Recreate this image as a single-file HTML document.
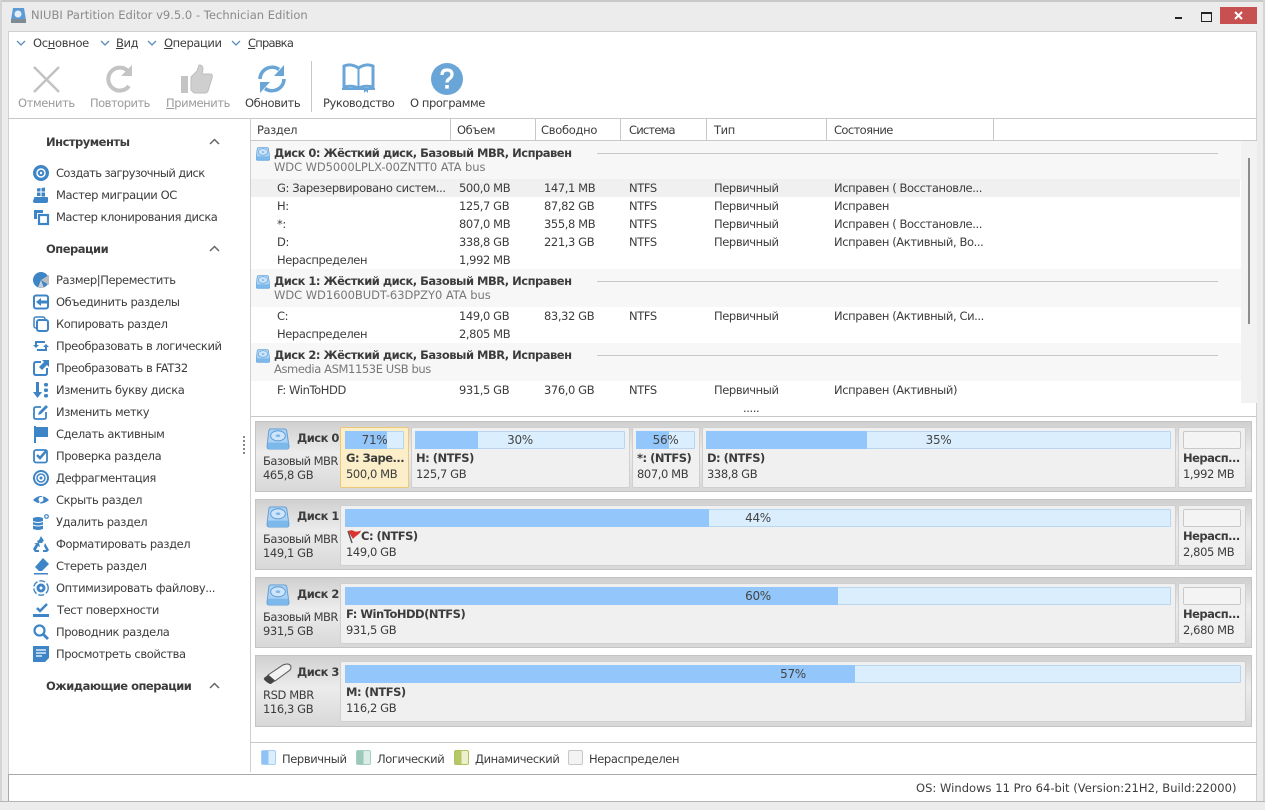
<!DOCTYPE html>
<html><head><meta charset="utf-8"><style>
html,body{margin:0;padding:0;width:1265px;height:810px;overflow:hidden;background:#ececec}
body{position:relative;font-family:"DejaVu Sans","Liberation Sans",sans-serif;font-size:11.5px;color:#3c3c3c}
.a,.t,.b{position:absolute}
.t{white-space:nowrap;line-height:14px;height:14px;letter-spacing:-.4px}
.h{font-weight:bold;font-size:11.5px;letter-spacing:-.5px}
.g{color:#9a9a9a}
svg{position:absolute;overflow:visible}
.l{position:absolute;background:#c8c8c8}
.i{fill:#3d85c6}
.dk{position:absolute;left:255px;width:997px;height:71px;background:linear-gradient(#d0d0d0,#ececec 45%,#d8d8d8);border:1px solid #c4c4c4;box-sizing:border-box}
.p{position:absolute;background:#f0f0f0;border:1px solid #cfcfcf;box-sizing:border-box;border-radius:2px}
.bar{position:absolute;height:18px;background:#dbeefe;border:1px solid #b9d6f0;box-sizing:border-box;border-radius:1px}
.fill{position:absolute;height:18px;background:#93c6fa}
.un{position:absolute;height:18px;width:58px;background:#f4f4f4;border:1px solid #c9c9c9;box-sizing:border-box;border-radius:2px}
.pc{position:absolute;height:18px;line-height:18px;text-align:center;color:#444;font-size:12px;letter-spacing:-.3px}
</style></head><body>
<svg width="0" height="0" style="position:absolute"><defs>
<symbol id="hdd" viewBox="0 0 24 24"><path d="M4 1h15q2 0 2.500 2L24 20q0 3-3 3H3q-3 0-3-3L2 3q.5-2 2-2z" fill="#a9d2f5" stroke="#5d9ad3"/><path d="M.5 16h23v4q0 3-3 3H3.500q-3 0-3-3z" fill="#7db8ea"/><ellipse cx="12" cy="8.500" rx="8" ry="5.500" fill="#cfe6fa" stroke="#5d9ad3"/><ellipse cx="12" cy="8.500" rx="2.500" ry="1.500" fill="#7db8ea"/></symbol>
</defs></svg>

<!-- window frame -->
<div class="l" style="left:0;top:0;width:1265px;height:2px"></div>
<div class="l" style="left:0;top:0;width:2px;height:810px;background:#d4d4d4"></div>
<div class="l" style="left:1263px;top:0;width:2px;height:810px;background:#d4d4d4"></div>
<div class="a" style="left:8px;top:31px;width:1249px;height:771px;background:#fff;box-sizing:border-box;border-top:1px solid #d0d0d0;border-right:1px solid #d0d0d0"></div>
<div class="l" style="left:8px;top:31px;width:1px;height:744px;background:#d0d0d0"></div>

<!-- title bar -->
<svg style="left:10px;top:7px" width="17" height="17" viewBox="0 0 17 17"><path d="M3 1h11l2 12v3H1v-3z" fill="#5d9bd5"/><path d="M1 12h15v4H1z" fill="#7e8a94"/><circle cx="8" cy="7" r="3.500" fill="#e2eefa"/></svg>
<div class="t" style="left:31px;top:8px;color:#8a8a8a;letter-spacing:.02px">NIUBI Partition Editor v9.5.0 - Technician Edition</div>
<div class="a" style="left:1175px;top:17px;width:7px;height:2px;background:#222"></div>
<div class="a" style="left:1201px;top:12px;width:9px;height:7px;border:1px solid #222;border-top-width:2px"></div>
<div class="a" style="left:1220px;top:7px;width:37px;height:17px;background:#c75050"></div>
<svg style="left:1234px;top:11px" width="9" height="9"><path d="M1 1l7 7M8 1L1 8" stroke="#fff" stroke-width="2"/></svg>

<!-- menu -->
<svg style="left:16px;top:40px" width="10" height="6"><path d="M1 1l4 4 4-4" fill="none" stroke="#5b8db8" stroke-width="1.300"/></svg>
<svg style="left:100px;top:40px" width="10" height="6"><path d="M1 1l4 4 4-4" fill="none" stroke="#5b8db8" stroke-width="1.300"/></svg>
<svg style="left:147px;top:40px" width="10" height="6"><path d="M1 1l4 4 4-4" fill="none" stroke="#5b8db8" stroke-width="1.300"/></svg>
<svg style="left:231px;top:40px" width="10" height="6"><path d="M1 1l4 4 4-4" fill="none" stroke="#5b8db8" stroke-width="1.300"/></svg>
<div class="t" style="left:33px;top:36px;letter-spacing:-.3px">Ос<u>н</u>овное</div>
<div class="t" style="left:116px;top:36px"><u>В</u>ид</div>
<div class="t" style="left:164px;top:36px"><u>О</u>перации</div>
<div class="t" style="left:248px;top:36px;letter-spacing:-.8px"><u>С</u>правка</div>

<!-- toolbar -->
<svg style="left:32px;top:65px" width="29" height="29"><path d="M2 2l25 25M27 2L2 27" stroke="#c2c2c2" stroke-width="2.500"/></svg>
<svg style="left:106px;top:64px" width="28" height="30" viewBox="0 0 28 30"><path d="M23 22a11.500 11.500 0 1 1-1-15" fill="none" stroke="#c4c4c4" stroke-width="4"/><path d="M26 1v11H15z" fill="#c4c4c4"/></svg>
<svg style="left:180px;top:64px" width="34" height="30" viewBox="0 0 34 30"><path d="M1 12h7v17H1z" fill="#c4c4c4"/><path d="M11 13l6-6 2-6q4 0 4 4l-1 5h9q2 1 1 4l-4 13q-1 2-3 2H14l-3-3z" fill="#cfcfcf" stroke="#bdbdbd"/></svg>
<svg style="left:257px;top:64px" width="30" height="30" viewBox="0 0 30 30"><path d="M3 15A12 12 0 0 1 22 5.500" fill="none" stroke="#6aa5d8" stroke-width="3.600"/><path d="M27 15A12 12 0 0 1 8 24.500" fill="none" stroke="#6aa5d8" stroke-width="3.600"/><path d="M27 1v11H17z" fill="#6aa5d8"/><path d="M3 29V18h10z" fill="#6aa5d8"/></svg>
<div class="l" style="left:311px;top:61px;width:1px;height:51px"></div>
<svg style="left:342px;top:64px" width="33" height="29" viewBox="0 0 33 29"><path d="M16.500 4Q9 -1 2 2v21q8-2 14.500 1Q23 21 31 23V2Q24 -1 16.500 4z" fill="#fff" stroke="#6aa5d8" stroke-width="3"/><path d="M16.500 4v20" stroke="#6aa5d8" stroke-width="2"/><path d="M0 24h33v2H26v3l-2-2-2 2v-3H0z" fill="#6aa5d8"/></svg>
<svg style="left:431px;top:63px" width="32" height="32" viewBox="0 0 32 32"><circle cx="16" cy="16" r="16" fill="#6aa5d8"/><path d="M11 12q0-5 5-5t5 4.500q0 2.500-3 4.500-2 1.300-2 3.500" fill="none" stroke="#fff" stroke-width="3.200"/><rect x="14.200" y="22" width="3.600" height="3.600" fill="#fff"/></svg>
<div class="t g" style="left:18px;top:96px">Отменить</div>
<div class="t g" style="left:90px;top:96px;letter-spacing:-.5px">Повторить</div>
<div class="t g" style="left:166px;top:96px"><u>П</u>рименить</div>
<div class="t" style="left:245px;top:96px">Обновить</div>
<div class="t" style="left:323px;top:96px;letter-spacing:-.45px">Руководство</div>
<div class="t" style="left:410px;top:96px">О программе</div>

<div class="l" style="left:8px;top:118px;width:1249px;height:1px"></div>
<div class="l" style="left:250px;top:118px;width:1px;height:654px;background:#cfcfcf"></div>

<!-- sidebar -->
<div class="t h" style="left:46px;top:135px">Инструменты</div>
<div class="t h" style="left:46px;top:242px">Операции</div>
<div class="t h" style="left:46px;top:679px">Ожидающие операции</div>
<svg style="left:209px;top:138px" width="11" height="7"><path d="M1 6l4.500-4.500L10 6" fill="none" stroke="#666" stroke-width="1.500"/></svg>
<svg style="left:209px;top:245px" width="11" height="7"><path d="M1 6l4.500-4.500L10 6" fill="none" stroke="#666" stroke-width="1.500"/></svg>
<svg style="left:209px;top:682px" width="11" height="7"><path d="M1 6l4.500-4.500L10 6" fill="none" stroke="#666" stroke-width="1.500"/></svg>

<div class="t" style="left:56px;top:166px;letter-spacing:-.6px">Создать загрузочный диск</div>
<div class="t" style="left:56px;top:188px">Мастер миграции ОС</div>
<div class="t" style="left:56px;top:210px;letter-spacing:-.5px">Мастер клонирования диска</div>
<div class="t" style="left:56px;top:273px">Размер|Переместить</div>
<div class="t" style="left:56px;top:295px">Объединить разделы</div>
<div class="t" style="left:56px;top:317px">Копировать раздел</div>
<div class="t" style="left:56px;top:339px">Преобразовать в логический</div>
<div class="t" style="left:56px;top:361px">Преобразовать в FAT32</div>
<div class="t" style="left:56px;top:383px">Изменить букву диска</div>
<div class="t" style="left:56px;top:405px">Изменить метку</div>
<div class="t" style="left:56px;top:427px">Сделать активным</div>
<div class="t" style="left:56px;top:449px">Проверка раздела</div>
<div class="t" style="left:56px;top:471px">Дефрагментация</div>
<div class="t" style="left:56px;top:493px">Скрыть раздел</div>
<div class="t" style="left:56px;top:515px">Удалить раздел</div>
<div class="t" style="left:56px;top:537px">Форматировать раздел</div>
<div class="t" style="left:56px;top:559px">Стереть раздел</div>
<div class="t" style="left:56px;top:581px">Оптимизировать файлову...</div>
<div class="t" style="left:57px;top:603px">Тест поверхности</div>
<div class="t" style="left:56px;top:625px">Проводник раздела</div>
<div class="t" style="left:56px;top:647px">Просмотреть свойства</div>

<!-- sidebar icons -->
<svg style="left:33px;top:165px" width="16" height="16"><circle cx="8" cy="8" r="8" fill="#3d85c6"/><circle cx="8" cy="8" r="4" fill="none" stroke="#fff" stroke-width="1.500"/><circle cx="8" cy="8" r="1.200" fill="#fff"/></svg>
<svg style="left:33px;top:187px" width="16" height="16" class="i"><path d="M1 11q0-1 1-1h12q1 0 1 1v3q0 2-2 2H2q-2 0-2-2zM4 1.500l3.500-.5v3.500H4zM8.500 1L12 .5v4H8.500zM4 5.500h3.500V9H4zM8.500 5.500H12V9.500H8.500z"/></svg>
<svg style="left:33px;top:209px" width="16" height="16"><path d="M1 1h9v3H4v6H1z" fill="#3d85c6"/><rect x="6" y="6" width="9" height="9" fill="#fff" stroke="#3d85c6" stroke-width="2.200"/></svg>
<svg style="left:33px;top:272px" width="16" height="16"><circle cx="8" cy="8" r="8" fill="#3d85c6"/><path d="M8 8l8-5v10z" fill="#b9bcc0"/><path d="M8 8l3 8-6-.5z" fill="#c9ccd0"/></svg>
<svg style="left:33px;top:294px" width="16" height="16"><rect x="1" y="1.500" width="14" height="13" rx="2" fill="none" stroke="#3d85c6" stroke-width="2"/><path d="M3 8l5-4v2.500h7v3H8V12z" fill="#3d85c6"/></svg>
<svg style="left:33px;top:316px" width="16" height="16"><rect x="1" y="1" width="11" height="11" rx="2" fill="none" stroke="#3d85c6" stroke-width="1.500"/><rect x="4" y="4" width="11" height="11" rx="2" fill="#fff" stroke="#3d85c6" stroke-width="2"/></svg>
<svg style="left:33px;top:338px" width="16" height="16"><path d="M3 7V4h9M13 9v3H4" fill="none" stroke="#3d85c6" stroke-width="2"/><path d="M0 7h6l-3 3zM16 9h-6l3-3z" fill="#3d85c6"/></svg>
<svg style="left:33px;top:360px" width="16" height="16"><path d="M8 2H3q-2 0-2 2v9q0 2 2 2h9q2 0 2-2V8" fill="none" stroke="#3d85c6" stroke-width="2"/><path d="M9 0h7v7l-2-2-5 5-3-3 5-5z" fill="#3d85c6"/></svg>
<svg style="left:33px;top:382px" width="16" height="16"><path d="M3 0h3v10h3l-4.500 6L0 10h3z" fill="#3d85c6"/><rect x="11" y="1" width="4" height="3.500" rx="1.500" fill="#3d85c6"/><rect x="11" y="6.500" width="4" height="3.500" rx="1.500" fill="#3d85c6"/><rect x="11" y="12" width="4" height="3.500" rx="1.500" fill="#3d85c6"/></svg>
<svg style="left:33px;top:404px" width="16" height="16"><path d="M8 3H3q-2 0-2 2v8q0 2 2 2h8q2 0 2-2V8" fill="none" stroke="#3d85c6" stroke-width="1.800"/><path d="M5 11l1-3 7-7 2 2-7 7z" fill="#3d85c6"/></svg>
<svg style="left:33px;top:426px" width="16" height="16"><path d="M1 0h2v17H1z" fill="#3d85c6"/><path d="M3 1h12v10H3z" fill="#3d85c6"/></svg>
<svg style="left:33px;top:448px" width="16" height="16"><rect x="1" y="2" width="13" height="12.500" rx="2" fill="none" stroke="#3d85c6" stroke-width="1.800"/><path d="M4 7l3 3 7-8" fill="none" stroke="#3d85c6" stroke-width="2.500"/></svg>
<svg style="left:33px;top:470px" width="16" height="16"><circle cx="8" cy="8" r="7" fill="none" stroke="#3d85c6" stroke-width="2"/><circle cx="8" cy="8" r="4" fill="none" stroke="#3d85c6" stroke-width="1.500"/><circle cx="8" cy="8" r="1.500" fill="#3d85c6"/></svg>
<svg style="left:33px;top:492px" width="16" height="16"><path d="M0 8q8-8 16 0-8 7-16 0z" fill="#3d85c6"/><circle cx="8" cy="7.500" r="2.500" fill="#fff"/><path d="M11 2L5 14" stroke="#fff" stroke-width="1"/></svg>
<svg style="left:33px;top:514px" width="16" height="16"><path d="M0 4q5-2 10 0v11q-5 2-10 0z" fill="#3d85c6"/><path d="M0 7.500q5 2 10 0M0 11q5 2 10 0" fill="none" stroke="#fff"/><circle cx="13.500" cy="2.500" r="1.800" fill="none" stroke="#3d85c6" stroke-width="1.200"/></svg>
<svg style="left:33px;top:536px" width="16" height="16"><path d="M8 0l3 5-2 1 1 1H5l-1-2 2-1zM12 7l4 7-2 2h-4v-2h3l-2-4zM0 13l3-5-2-1h5l1 4-2-1-2 4h3v2H2z" fill="#3d85c6"/></svg>
<svg style="left:33px;top:558px" width="16" height="16"><path d="M10 0l6 6-7 7H6L2 9z" fill="#3d85c6"/><path d="M1 15h14v1.500H1z" fill="#3d85c6"/></svg>
<svg style="left:33px;top:580px" width="16" height="16"><circle cx="8" cy="8" r="4.500" fill="#3d85c6"/><circle cx="8" cy="8" r="1.500" fill="#fff"/><circle cx="8" cy="8" r="7.200" fill="none" stroke="#3d85c6" stroke-width="1.400" stroke-dasharray="6 2"/></svg>
<svg style="left:33px;top:602px" width="16" height="16"><path d="M4 6l3 3 7-7" fill="none" stroke="#3d85c6" stroke-width="2.500"/><path d="M0 12h16v3H0z" fill="#3d85c6"/></svg>
<svg style="left:33px;top:624px" width="16" height="16"><circle cx="6.500" cy="6.500" r="5" fill="none" stroke="#3d85c6" stroke-width="2.200"/><path d="M10 10l5 5" stroke="#3d85c6" stroke-width="2.800"/></svg>
<svg style="left:33px;top:646px" width="16" height="16"><path d="M0 0h16v12l-4 4H0z" fill="#3d85c6"/><path d="M3 4h10M3 7h10M3 10h6" stroke="#fff" stroke-width="1.200"/></svg>

<div class="a" style="left:243px;top:436px;width:2px;height:18px;background:repeating-linear-gradient(#888 0 2px,transparent 2px 4px)"></div>

<!-- table header -->
<div class="l" style="left:251px;top:140px;width:1006px;height:1px"></div>
<div class="l" style="left:450px;top:119px;width:1px;height:21px"></div>
<div class="l" style="left:535px;top:119px;width:1px;height:21px"></div>
<div class="l" style="left:620px;top:119px;width:1px;height:21px"></div>
<div class="l" style="left:706px;top:119px;width:1px;height:21px"></div>
<div class="l" style="left:826px;top:119px;width:1px;height:21px"></div>
<div class="l" style="left:993px;top:119px;width:1px;height:21px"></div>
<div class="t" style="left:257px;top:123px">Раздел</div>
<div class="t" style="left:457px;top:123px">Объем</div>
<div class="t" style="left:541px;top:123px;letter-spacing:-.3px">Свободно</div>
<div class="t" style="left:629px;top:123px;letter-spacing:-.8px">Система</div>
<div class="t" style="left:714px;top:123px">Тип</div>
<div class="t" style="left:834px;top:123px;letter-spacing:-.6px">Состояние</div>

<!-- table bands -->
<div class="a" style="left:251px;top:141px;width:990px;height:38px;background:#f7f7f7"></div>
<div class="a" style="left:251px;top:179px;width:989px;height:18px;background:#f0f0f0"></div>
<div class="a" style="left:251px;top:269px;width:990px;height:38px;background:#f7f7f7"></div>
<div class="a" style="left:251px;top:343px;width:990px;height:38px;background:#f7f7f7"></div>
<div class="a" style="left:1241px;top:141px;width:16px;height:262px;background:#f2f2f2"></div>
<div class="a" style="left:1248px;top:158px;width:2px;height:166px;background:#8c8c8c"></div>
<div class="l" style="left:597px;top:153px;width:621px;height:1px"></div>
<div class="l" style="left:597px;top:281px;width:621px;height:1px"></div>
<div class="l" style="left:597px;top:355px;width:621px;height:1px"></div>
<svg style="left:256px;top:147px" width="14" height="14"><use href="#hdd"/></svg>
<svg style="left:256px;top:275px" width="14" height="14"><use href="#hdd"/></svg>
<svg style="left:256px;top:349px" width="14" height="14"><use href="#hdd"/></svg>

<div class="t h" style="left:274px;top:146px">Диск 0: Жёсткий диск, Базовый MBR, Исправен</div>
<div class="t" style="left:274px;top:160px;color:#777;letter-spacing:-.08px">WDC WD5000LPLX-00ZNTT0 ATA bus</div>
<div class="t" style="left:277px;top:181px">G: Зарезервировано систем...</div><div class="t" style="left:459px;top:181px">500,0 MB</div><div class="t" style="left:544px;top:181px">147,1 MB</div><div class="t" style="left:629px;top:181px">NTFS</div><div class="t" style="left:714px;top:181px">Первичный</div><div class="t" style="left:834px;top:181px">Исправен ( Восстановле...</div>
<div class="t" style="left:277px;top:199px">H:</div><div class="t" style="left:459px;top:199px">125,7 GB</div><div class="t" style="left:544px;top:199px">87,82 GB</div><div class="t" style="left:629px;top:199px">NTFS</div><div class="t" style="left:714px;top:199px">Первичный</div><div class="t" style="left:834px;top:199px">Исправен</div>
<div class="t" style="left:277px;top:217px">*:</div><div class="t" style="left:459px;top:217px">807,0 MB</div><div class="t" style="left:544px;top:217px">355,8 MB</div><div class="t" style="left:629px;top:217px">NTFS</div><div class="t" style="left:714px;top:217px">Первичный</div><div class="t" style="left:834px;top:217px">Исправен ( Восстановле...</div>
<div class="t" style="left:277px;top:235px">D:</div><div class="t" style="left:459px;top:235px">338,8 GB</div><div class="t" style="left:544px;top:235px">221,3 GB</div><div class="t" style="left:629px;top:235px">NTFS</div><div class="t" style="left:714px;top:235px">Первичный</div><div class="t" style="left:834px;top:235px">Исправен (Активный, Во...</div>
<div class="t" style="left:277px;top:253px">Нераспределен</div><div class="t" style="left:459px;top:253px">1,992 MB</div>
<div class="t h" style="left:274px;top:274px">Диск 1: Жёсткий диск, Базовый MBR, Исправен</div>
<div class="t" style="left:274px;top:288px;color:#777;letter-spacing:-.05px">WDC WD1600BUDT-63DPZY0 ATA bus</div>
<div class="t" style="left:277px;top:309px">C:</div><div class="t" style="left:459px;top:309px">149,0 GB</div><div class="t" style="left:544px;top:309px">83,32 GB</div><div class="t" style="left:629px;top:309px">NTFS</div><div class="t" style="left:714px;top:309px">Первичный</div><div class="t" style="left:834px;top:309px">Исправен (Активный, Си...</div>
<div class="t" style="left:277px;top:327px">Нераспределен</div><div class="t" style="left:459px;top:327px">2,805 MB</div>
<div class="t h" style="left:274px;top:348px">Диск 2: Жёсткий диск, Базовый MBR, Исправен</div>
<div class="t" style="left:274px;top:362px;color:#777">Asmedia ASM1153E USB bus</div>
<div class="t" style="left:277px;top:383px">F: WinToHDD</div><div class="t" style="left:459px;top:383px">931,5 GB</div><div class="t" style="left:544px;top:383px">376,0 GB</div><div class="t" style="left:629px;top:383px">NTFS</div><div class="t" style="left:714px;top:383px">Первичный</div><div class="t" style="left:834px;top:383px">Исправен (Активный)</div>
<div class="t" style="left:743px;top:401px">.....</div>
<div class="l" style="left:251px;top:416px;width:1006px;height:1px"></div>

<!-- Disk 0 -->
<div class="dk" style="top:421px"></div>
<svg style="left:266px;top:428px" width="24" height="22"><use href="#hdd"/></svg>
<div class="t h" style="left:297px;top:431px">Диск 0</div>
<div class="t" style="left:263px;top:454px;letter-spacing:-.55px">Базовый MBR</div>
<div class="t" style="left:263px;top:468px">465,8 GB</div>
<div class="p" style="left:340px;top:427px;width:69px;height:61px;background:#fbeec8;border-color:#ecc978"></div>
<div class="bar" style="left:345px;top:431px;width:59px"></div><div class="fill" style="left:345px;top:431px;width:42px"></div><div class="pc" style="left:345px;top:431px;width:59px">71%</div>
<div class="t h" style="left:346px;top:451px">G: Заре...</div><div class="t" style="left:346px;top:467px">500,0 MB</div>
<div class="p" style="left:411px;top:427px;width:219px;height:61px"></div>
<div class="bar" style="left:415px;top:431px;width:210px"></div><div class="fill" style="left:415px;top:431px;width:63px"></div><div class="pc" style="left:415px;top:431px;width:210px">30%</div>
<div class="t h" style="left:416px;top:451px">H: (NTFS)</div><div class="t" style="left:416px;top:467px">125,7 GB</div>
<div class="p" style="left:632px;top:427px;width:68px;height:61px"></div>
<div class="bar" style="left:636px;top:431px;width:59px"></div><div class="fill" style="left:636px;top:431px;width:33px"></div><div class="pc" style="left:636px;top:431px;width:59px">56%</div>
<div class="t h" style="left:637px;top:451px">*: (NTFS)</div><div class="t" style="left:637px;top:467px">807,0 MB</div>
<div class="p" style="left:702px;top:427px;width:474px;height:61px"></div>
<div class="bar" style="left:706px;top:431px;width:465px"></div><div class="fill" style="left:706px;top:431px;width:161px"></div><div class="pc" style="left:706px;top:431px;width:465px">35%</div>
<div class="t h" style="left:707px;top:451px">D: (NTFS)</div><div class="t" style="left:707px;top:467px">338,8 GB</div>
<div class="p" style="left:1178px;top:427px;width:68px;height:61px"></div><div class="un" style="left:1183px;top:431px"></div>
<div class="t h" style="left:1183px;top:451px">Нерасп...</div><div class="t" style="left:1183px;top:467px">1,992 MB</div>

<!-- Disk 1 -->
<div class="dk" style="top:499px"></div>
<svg style="left:266px;top:506px" width="24" height="22"><use href="#hdd"/></svg>
<div class="t h" style="left:297px;top:509px">Диск 1</div>
<div class="t" style="left:263px;top:532px;letter-spacing:-.55px">Базовый MBR</div>
<div class="t" style="left:263px;top:546px">149,1 GB</div>
<div class="p" style="left:340px;top:505px;width:836px;height:61px"></div>
<div class="bar" style="left:345px;top:509px;width:826px"></div><div class="fill" style="left:345px;top:509px;width:364px"></div><div class="pc" style="left:345px;top:509px;width:826px">44%</div>
<svg style="left:346px;top:529px" width="16" height="15"><path d="M6 14L2 2" stroke="#555" stroke-width="1.400"/><path d="M2 2q4-1.500 6 0t7-.5q-1 3-3.500 4.500T7 10z" fill="#d8352f"/></svg>
<div class="t h" style="left:361px;top:529px">C: (NTFS)</div><div class="t" style="left:346px;top:545px">149,0 GB</div>
<div class="p" style="left:1178px;top:505px;width:68px;height:61px"></div><div class="un" style="left:1183px;top:509px"></div>
<div class="t h" style="left:1183px;top:529px">Нерасп...</div><div class="t" style="left:1183px;top:545px">2,805 MB</div>

<!-- Disk 2 -->
<div class="dk" style="top:577px"></div>
<svg style="left:266px;top:584px" width="24" height="22"><use href="#hdd"/></svg>
<div class="t h" style="left:297px;top:587px">Диск 2</div>
<div class="t" style="left:263px;top:610px;letter-spacing:-.55px">Базовый MBR</div>
<div class="t" style="left:263px;top:624px">931,5 GB</div>
<div class="p" style="left:340px;top:583px;width:836px;height:61px"></div>
<div class="bar" style="left:345px;top:587px;width:826px"></div><div class="fill" style="left:345px;top:587px;width:493px"></div><div class="pc" style="left:345px;top:587px;width:826px">60%</div>
<div class="t h" style="left:346px;top:607px">F: WinToHDD(NTFS)</div><div class="t" style="left:346px;top:623px">931,5 GB</div>
<div class="p" style="left:1178px;top:583px;width:68px;height:61px"></div><div class="un" style="left:1183px;top:587px"></div>
<div class="t h" style="left:1183px;top:607px">Нерасп...</div><div class="t" style="left:1183px;top:623px">2,680 MB</div>

<!-- Disk 3 -->
<div class="dk" style="top:655px;height:72px"></div>
<svg style="left:263px;top:663px" width="30" height="22" viewBox="0 0 30 22"><path d="M5 12L20 2q5-2 7 0t0 5L12 18z" fill="#f2f2f2" stroke="#555"/><path d="M5 12l7 6-4 3q-2 0-5-2.500T1 15z" fill="#444"/></svg>
<div class="t h" style="left:297px;top:665px">Диск 3</div>
<div class="t" style="left:263px;top:688px">RSD MBR</div>
<div class="t" style="left:263px;top:702px">116,3 GB</div>
<div class="p" style="left:340px;top:661px;width:906px;height:61px"></div>
<div class="bar" style="left:345px;top:665px;width:896px"></div><div class="fill" style="left:345px;top:665px;width:510px"></div><div class="pc" style="left:345px;top:665px;width:896px">57%</div>
<div class="t h" style="left:346px;top:685px">M: (NTFS)</div><div class="t" style="left:346px;top:701px">116,2 GB</div>

<!-- legend -->
<div class="l" style="left:251px;top:742px;width:1006px;height:1px"></div>
<div class="a" style="left:261px;top:750px;width:15px;height:15px;border-radius:2px;background:linear-gradient(90deg,#8fc3f7 50%,#dcedfc 50%);box-sizing:border-box;border:1px solid #a8cff2"></div>
<div class="a" style="left:356px;top:750px;width:15px;height:15px;border-radius:2px;background:linear-gradient(90deg,#9ac8ba 50%,#daece6 50%);box-sizing:border-box;border:1px solid #a6cfc2"></div>
<div class="a" style="left:454px;top:750px;width:15px;height:15px;border-radius:2px;background:linear-gradient(90deg,#b5c766 50%,#eef0cc 50%);box-sizing:border-box;border:1px solid #b0c160"></div>
<div class="a" style="left:568px;top:750px;width:15px;height:15px;border-radius:2px;background:#f3f3f3;box-sizing:border-box;border:1px solid #c8c8c8"></div>
<div class="t" style="left:282px;top:752px">Первичный</div>
<div class="t" style="left:377px;top:752px">Логический</div>
<div class="t" style="left:475px;top:752px">Динамический</div>
<div class="t" style="left:589px;top:752px">Нераспределен</div>

<!-- status -->
<div class="a" style="left:8px;top:774px;width:1249px;height:1px;background:#a8a8a8"></div>
<div class="a" style="left:8px;top:774px;width:1px;height:28px;background:#a8a8a8"></div>
<div class="a" style="left:0;top:801px;width:1265px;height:1px;background:#b4b4b4"></div>
<div class="a" style="left:0;top:802px;width:1265px;height:8px;background:#ececec"></div>
<div class="t" style="left:916px;top:781px;letter-spacing:.03px">OS: Windows 11 Pro 64-bit (Version:21H2, Build:22000)</div>
</body></html>
